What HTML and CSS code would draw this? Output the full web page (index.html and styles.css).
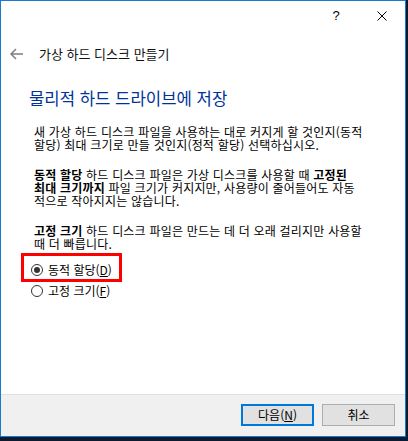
FILE: index.html
```html
<!DOCTYPE html>
<html lang="ko">
<head>
<meta charset="utf-8">
<link rel="stylesheet" href="styles.css">
</head>
<body>
<div class="window">
  <div class="titlebar">
    <div class="tb-btn help">?</div>
    <div class="tb-btn close">
      <svg width="10" height="10" viewBox="0 0 10 10"><path d="M0.5 0.5 L9.5 9.5 M9.5 0.5 L0.5 9.5" stroke="#000" stroke-width="1" fill="none"/></svg>
    </div>
  </div>
  <div class="nav">
    <svg class="back" width="14" height="12" viewBox="0 0 14 12"><path d="M1 6 H13 M6 1 L1 6 L6 11" stroke="#7f7f7f" stroke-width="1.5" fill="none"/></svg>
    <span class="nav-title">가상 하드 디스크 만들기</span>
  </div>
  <div class="main">
    <h1 class="heading">물리적 하드 드라이브에 저장</h1>
    <p class="para"><span class="ln">새 가상 하드 디스크 파일을 사용하는 대로 커지게 할 것인지(동적</span><span class="ln">할당) 최대 크기로 만들 것인지(정적 할당) 선택하십시오.</span></p>
    <p class="para"><span class="ln"><b>동적 할당</b> 하드 디스크 파일은 가상 디스크를 사용할 때 <b>고정된</b></span><span class="ln"><b>최대 크기까지</b> 파일 크기가 커지지만, 사용량이 줄어들어도 자동</span><span class="ln">적으로 작아지지는 않습니다.</span></p>
    <p class="para"><span class="ln"><b>고정 크기</b> 하드 디스크 파일은 만드는 데 더 오래 걸리지만 사용할</span><span class="ln">때 더 빠릅니다.</span></p>
    <div class="options">
      <div class="highlight">
        <label class="radio-row"><span class="radio checked"></span><span>동적 할당(<u>D</u>)</span></label>
      </div>
      <label class="radio-row plain"><span class="radio"></span><span>고정 크기(<u>F</u>)</span></label>
    </div>
  </div>
  <div class="footer">
    <button class="btn primary">다음(<u>N</u>)</button>
    <button class="btn">취소</button>
  </div>
</div>
</body>
</html>
```

FILE: styles.css
```css
html, body {
  margin: 0;
  padding: 0;
}
body {
  width: 408px;
  height: 441px;
  background: #0b1a30;
  font-family: "Noto Sans CJK KR", "Noto Sans", sans-serif;
  color: #000;
  overflow: hidden;
}
.window {
  width: 406px;
  height: 437px;
  box-sizing: border-box;
  border: 1px solid #1979ca;
  background: #fff;
  display: flex;
  flex-direction: column;
}
.titlebar {
  height: 30px;
  display: flex;
  justify-content: flex-end;
  align-items: center;
}
.tb-btn {
  width: 46px;
  height: 30px;
  display: flex;
  align-items: center;
  justify-content: center;
}
.help {
  font-family: "Liberation Sans", sans-serif;
  font-size: 13px;
  padding-bottom: 1px;
  box-sizing: border-box;
}
.nav {
  height: 46px;
  display: flex;
  align-items: center;
  padding-left: 9px;
}
.back {
  display: block;
}
.nav-title {
  margin-left: 15px;
  font-size: 13px;
  line-height: 16px;
  color: #111;
}
.main {
  flex: 1;
  padding: 10px 0 0 28px;
}
.heading {
  margin: 0;
  font-weight: normal;
  font-size: 16.7px;
  line-height: 22px;
  color: #003399;
}
.para {
  margin: 16px 0 0 5px;
  font-size: 12px;
  line-height: 13px;
  letter-spacing: 0.2px;
  white-space: nowrap;
}
.para + .para {
  margin-top: 17px;
}
.ln {
  display: block;
  height: 13px;
  overflow: visible;
}
.para b {
  font-weight: bold;
}
.options {
  margin-top: 3px;
  margin-left: -8px;
  font-size: 12px;
}
.highlight {
  display: inline-block;
  border: 3px solid #ff0000;
  padding: 5px 7px 1px 7px;
}
.radio-row {
  display: flex;
  align-items: center;
  gap: 5px;
  line-height: 17px;
}
.radio-row.plain {
  padding-left: 10px;
  line-height: 17px;
}
.radio {
  width: 12px;
  height: 12px;
  box-sizing: border-box;
  border: 1px solid #333;
  border-radius: 50%;
  background: #fff;
  display: flex;
  align-items: center;
  justify-content: center;
}
.radio.checked::after {
  content: "";
  width: 6px;
  height: 6px;
  border-radius: 50%;
  background: #333;
}
.footer {
  height: 42px;
  box-sizing: border-box;
  border-top: 1px solid #dfdfdf;
  background: #f0f0f0;
  display: flex;
  justify-content: flex-end;
  align-items: flex-start;
  gap: 8px;
  padding: 9px 10px 0 0;
}
.btn {
  width: 73px;
  height: 22px;
  box-sizing: border-box;
  border: 1px solid #adadad;
  background: #e1e1e1;
  font-family: "Noto Sans CJK KR", sans-serif;
  font-size: 12px;
  line-height: 16px;
  padding: 0;
  color: #000;
}
.btn.primary {
  border: 2px solid #0078d7;
}
```
